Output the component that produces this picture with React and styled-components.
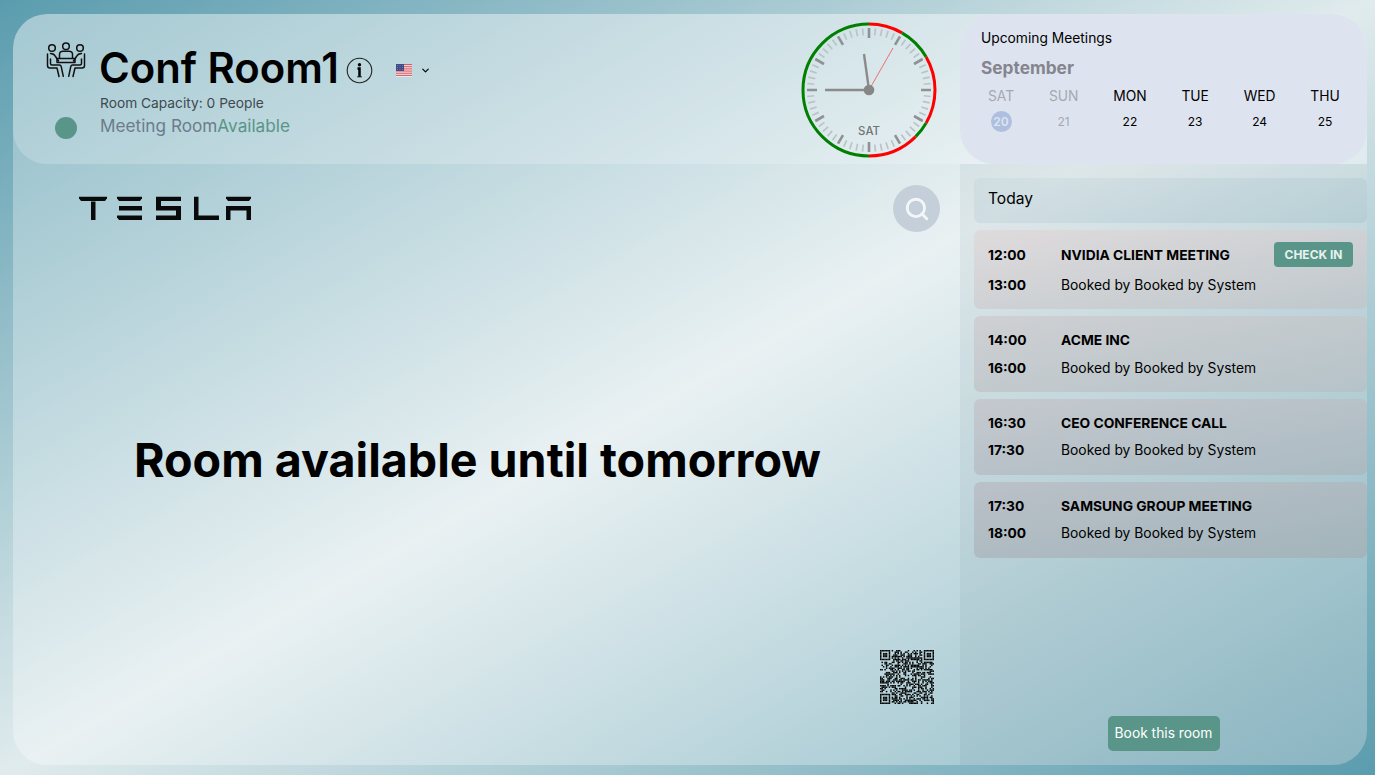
import styled, { createGlobalStyle } from "styled-components";
import { Search, ChevronDown } from "lucide-react";

const GlobalStyle = createGlobalStyle`
    html, body {
        margin: 0;
        height: 100%;
        overflow: hidden;
    }
    body {
        font-family: Inter, "Liberation Sans", sans-serif;
        color: #000;
        background: linear-gradient(to bottom right, #5a9cae 0%, #e0ebed 50%, #5a9cae 100%);
    }
`;

const Page = styled.div`
    width: 1375px;
    height: 775px;
    box-sizing: border-box;
    padding: 14px 8px 10px 13px;
`;

const Frame = styled.div`
    height: 751px;
    border-radius: 34px;
    background: rgba(255, 255, 255, 0.3);
    display: flex;
    flex-direction: column;
    overflow: hidden;
`;

const Header = styled.header`
    height: 150px;
    flex: none;
    display: flex;
    border-radius: 34px 34px 0 34px;
    background: rgba(255, 255, 255, 0.2);
`;

const RoomInfo = styled.div`
    width: 788px;
    flex: none;
    display: flex;
    box-sizing: border-box;
    padding: 28px 0 0 33px;
`;

const RoomIconColumn = styled.div`
    width: 54px;
    flex: none;
    display: flex;
    flex-direction: column;
    align-items: flex-start;
`;

const StatusDot = styled.span`
    width: 22px;
    height: 22px;
    margin: 37px 0 0 9px;
    border-radius: 50%;
    background: #5a9589;
`;

const TitleRow = styled.div`
    display: flex;
    align-items: center;
    height: 52px;
`;

const Title = styled.h1`
    margin: 0 0 0 -1px;
    font-size: 41.8px;
    line-height: 52px;
    font-weight: 600;
`;

const InfoButton = styled.span`
    display: flex;
    margin: 5px 0 0 7px;
`;

const LanguageButton = styled.span`
    display: flex;
    align-items: center;
    gap: 8px;
    margin: 5px 0 0 23px;
`;

const Capacity = styled.div`
    font-size: 13.75px;
    line-height: 18px;
    color: #3f4a50;
`;

const RoomStatus = styled.div`
    margin-top: 2px;
    font-size: 17.2px;
    line-height: 24px;
    color: #6b7c8c;
`;

const Available = styled.span`
    color: #5a9589;
`;

const ClockBox = styled.div`
    width: 159px;
    flex: none;
    box-sizing: border-box;
    padding-top: 8px;
`;

const Calendar = styled.section`
    width: 407px;
    flex: none;
    box-sizing: border-box;
    padding: 15px 21px 0;
    border-radius: 34px;
    background: #dee4ef;
`;

const CalendarTitle = styled.div`
    font-size: 13.8px;
    line-height: 18px;
`;

const Month = styled.div`
    margin-top: 9px;
    font-size: 17.3px;
    line-height: 24px;
    font-weight: 700;
    color: #85858f;
`;

const Days = styled.div`
    display: flex;
    gap: 34.8px;
    margin: 4px 0 0 7px;
`;

const Day = styled.div`
    display: flex;
    flex-direction: column;
    align-items: center;
    color: ${(p) => (p.$muted ? "#a6a9b2" : "#000")};
`;

const DayName = styled.span`
    font-size: 13.8px;
    line-height: 24px;
`;

const DayNumber = styled.span`
    width: 21px;
    height: 21px;
    margin-top: 3px;
    border-radius: 50%;
    display: flex;
    align-items: center;
    justify-content: center;
    font-size: 12px;
    font-weight: ${(p) => (p.$today ? 600 : 400)};
    color: ${(p) => (p.$today ? "#dee4ef" : "inherit")};
    background: ${(p) => (p.$today ? "#aebfdf" : "transparent")};
`;

const Body = styled.div`
    flex: 1;
    min-height: 0;
    display: flex;
`;

const MainPanel = styled.main`
    width: 947px;
    flex: none;
    box-sizing: border-box;
    display: flex;
    flex-direction: column;
    padding: 21px 20px 61px 65px;
`;

const BrandRow = styled.div`
    display: flex;
    justify-content: space-between;
    align-items: flex-start;
`;

const LogoBox = styled.div`
    display: flex;
    margin-top: 11px;
`;

const SearchButton = styled.span`
    width: 47px;
    height: 47px;
    border-radius: 50%;
    background: #c5cfd9;
    display: flex;
    align-items: center;
    justify-content: center;
    color: #f4f7f9;
`;

const Headline = styled.h2`
    margin: 200px 0 0;
    padding-left: 56px;
    font-size: 46.6px;
    line-height: 56px;
    font-weight: 700;
`;

const QrRow = styled.div`
    margin-top: auto;
    display: flex;
    justify-content: flex-end;
    padding-right: 6px;
`;

const SidePanel = styled.aside`
    flex: 1;
    box-sizing: border-box;
    display: flex;
    flex-direction: column;
    padding: 14px 0 14px 14px;
    background: rgba(90, 120, 130, 0.08);
`;

const TodayBar = styled.div`
    height: 45px;
    flex: none;
    box-sizing: border-box;
    padding: 0 0 5px 14px;
    display: flex;
    align-items: center;
    font-size: 15.6px;
    border-radius: 6px;
    background: linear-gradient(to bottom right, rgba(100, 150, 170, 0.08), rgba(100, 150, 170, 0.15));
`;

const MeetingList = styled.div`
    display: flex;
    flex-direction: column;
    gap: 7px;
    margin-top: 7px;
`;

const MeetingCard = styled.article`
    height: ${(p) => p.$height}px;
    box-sizing: border-box;
    padding: 0 14px ${(p) => (p.$shift ? 3 : 0)}px 14px;
    display: grid;
    grid-template-columns: 73px 1fr auto;
    align-content: center;
    align-items: center;
    row-gap: ${(p) => p.$rowGap}px;
    border-radius: 6px;
    background: linear-gradient(to bottom right, ${(p) => p.$from}, ${(p) => p.$to});
`;

const Time = styled.span`
    font-size: 13.8px;
    line-height: 18px;
    font-weight: 700;
`;

const MeetingTitle = styled.span`
    font-size: 13.8px;
    line-height: 18px;
    font-weight: 700;
`;

const BookedBy = styled.span`
    grid-column: 2 / 4;
    font-size: 13.85px;
    line-height: 18px;
`;

const CheckIn = styled.button`
    width: 79px;
    height: 25px;
    padding: 0;
    border: 0;
    border-radius: 4px;
    background: #5a9589;
    color: #e6f3ef;
    font-family: Inter, sans-serif;
    font-size: 12px;
    font-weight: 700;
`;

const BookRow = styled.div`
    margin-top: auto;
    padding-right: 14px;
    display: flex;
    justify-content: center;
`;

const BookButton = styled.button`
    width: 112px;
    height: 35px;
    padding: 0 0 1px;
    border: 0;
    border-radius: 5px;
    background: #5a9589;
    color: #fff;
    font-family: Inter, sans-serif;
    font-size: 13.8px;
`;

const MEETINGS = [
    { start: "12:00", end: "13:00", title: "NVIDIA CLIENT MEETING", checkIn: true, height: 79, rowGap: 8.5, from: "#dfdbdc", to: "#bfc8cd" },
    { start: "14:00", end: "16:00", title: "ACME INC", height: 76, rowGap: 10, from: "#cfd0d3", to: "#b5c3c8" },
    { start: "16:30", end: "17:30", title: "CEO CONFERENCE CALL", height: 75.5, rowGap: 9, from: "#c5c9cf", to: "#aabac1" },
    { start: "17:30", end: "18:00", title: "SAMSUNG GROUP MEETING", height: 76, rowGap: 9, from: "#bbc1c8", to: "#a2b4bb" },
];

const DAYS = [
    { name: "SAT", num: 20, muted: true, today: true },
    { name: "SUN", num: 21, muted: true },
    { name: "MON", num: 22 },
    { name: "TUE", num: 23 },
    { name: "WED", num: 24 },
    { name: "THU", num: 25 },
];

// clock arcs, degrees clockwise from 12
const ARCS = [
    { from: 0, to: 30, color: "#ff0000" },
    { from: 30, to: 60, color: "#008000" },
    { from: 60, to: 120, color: "#ff0000" },
    { from: 120, to: 135, color: "#008000" },
    { from: 135, to: 180, color: "#ff0000" },
    { from: 180, to: 360, color: "#008000" },
];

const polar = (deg, r) => {
    const a = ((deg - 90) * Math.PI) / 180;
    return [68 + r * Math.cos(a), 68 + r * Math.sin(a)];
};

const Clock = () => (
    <svg width="136" height="136" viewBox="0 0 136 136">
        {Array.from({ length: 60 }, (_, i) => {
            const major = i % 5 === 0;
            const [x1, y1] = polar(i * 6, 62);
            const [x2, y2] = polar(i * 6, major ? 52 : 55);
            return (
                <line
                    key={i}
                    x1={x1}
                    y1={y1}
                    x2={x2}
                    y2={y2}
                    stroke={major ? "#8e9294" : "#bcc3c7"}
                    strokeWidth={major ? 2.6 : 1.7}
                />
            );
        })}
        {ARCS.map((arc) => {
            const [x1, y1] = polar(arc.from, 66);
            const [x2, y2] = polar(arc.to, 66);
            const large = arc.to - arc.from > 180 ? 1 : 0;
            return (
                <path
                    key={arc.from}
                    d={`M${x1} ${y1}A66 66 0 ${large} 1 ${x2} ${y2}`}
                    fill="none"
                    stroke={arc.color}
                    strokeWidth="3"
                />
            );
        })}
        <line x1="68" y1="68" x2="63" y2="32" stroke="#8b8b8b" strokeWidth="2.4" />
        <line x1="68" y1="68" x2="24" y2="68" stroke="#8b8b8b" strokeWidth="2.4" />
        <line x1="68" y1="68" x2="92" y2="26" stroke="#f06060" strokeWidth="0.9" />
        <circle cx="68" cy="68" r="5.3" fill="#868686" />
        <text x="68" y="113" textAnchor="middle" fontFamily="Inter, sans-serif" fontSize="11.4" fontWeight="500" fill="#737373">
            SAT
        </text>
    </svg>
);

const RoomIcon = () => (
    <svg width="42" height="38" viewBox="0 0 42 38" fill="none" stroke="#111" strokeWidth="1.5" strokeLinejoin="round" strokeLinecap="round">
        <circle cx="6" cy="6" r="3.3" />
        <circle cx="20" cy="4.2" r="3.3" />
        <circle cx="34" cy="6" r="3.3" />
        <path d="M13.5 16v-3.5c0-2 1.5-3.2 3.5-3.2h6c2 0 3.500 1.200 3.500 3.200V16" />
        <path d="M11 16.500h18v4H11z" />
        <path d="M1.500 12v11.500c0 1.500 1 2.500 2.500 2.500h7l2 8.500" />
        <path d="M4.500 11.500c2.500 0 4 1 5 3l3 4.500" />
        <path d="M4.500 17v4.500c0 1 .5 1.500 1.500 1.500h7.500c1 0 1.500.8 1.800 1.800l2 9.500" />
        <path d="M38.500 12v11.500c0 1.500-1 2.500-2.500 2.500h-7l-2 8.500" />
        <path d="M35.500 11.500c-2.500 0-4 1-5 3l-3 4.500" />
        <path d="M35.500 17v4.500c0 1-.5 1.500-1.500 1.500h-7.500c-1 0-1.500.8-1.800 1.800l-2 9.500" />
    </svg>
);

const InfoIcon = () => (
    <svg width="27" height="27" viewBox="0 0 27 27" fill="none">
        <circle cx="13.5" cy="13.500" r="12.300" stroke="#222" strokeWidth="1.1" />
        <circle cx="13.500" cy="7.800" r="1.700" fill="#000" />
        <path d="M11.500 11.500h2v8" stroke="#000" strokeWidth="2.500" />
        <path d="M11.300 19.800h4.500" stroke="#000" strokeWidth="1" />
    </svg>
);

const UsFlag = () => (
    <svg width="16" height="13" viewBox="0 0 16 13">
        <rect width="16" height="13" fill="#f5efef" />
        {Array.from({ length: 7 }, (_, i) => (
            <rect key={i} y={i * 1.857} width="16" height="0.93" fill="#d4505a" />
        ))}
        <rect width="8" height="7" fill="#3f4a86" />
        {[1.5, 3.500, 5.500].map((y) =>
            [1.500, 4, 6.500].map((x) => <circle key={`${x}-${y}`} cx={x} cy={y} r="0.4" fill="#aab0d0" />)
        )}
    </svg>
);

const TeslaLogo = () => (
    <svg width="174" height="24" viewBox="0 0 174 24" fill="#0a0a0a">
        <path d="M1 .8h28v1.500l-2 2.700H3L1 2.300z" />
        <path d="M13 5.500h4.500V24H13z" />
        <path d="M39 .8h25v1.500l-2 2.700H41l-2-2.700z" />
        <path d="M41 10h23v4.500H41z" />
        <path d="M39 19.500l2 0h23V24H41l-2-2.700z" />
        <path d="M78 .8h25V5H83v5h20v14H78v-4.500h20V14.500H78z" />
        <path d="M116 .8h4.500v18.700H141V24h-25z" />
        <path d="M148 .8h25v1.500l-2 2.700h-21l-2-2.700z" />
        <path d="M148 10h25v14h-4.500v-9.500h-16V24H148z" />
    </svg>
);

// not the real code, just a stable noise with the three finder squares
const QrCode = () => {
    const size = 37;
    const cells = [];
    const inFinder = (x, y, ox, oy) => x >= ox - 1 && x <= ox + 7 && y >= oy - 1 && y <= oy + 7;
    const finderOn = (x, y, ox, oy) => {
        const dx = x - ox;
        const dy = y - oy;
        if (dx < 0 || dy < 0 || dx > 6 || dy > 6) return false;
        const ring = dx === 0 || dy === 0 || dx === 6 || dy === 6;
        const core = dx >= 2 && dx <= 4 && dy >= 2 && dy <= 4;
        return ring || core;
    };
    let seed = 7;
    for (let y = 0; y < size; y++) {
        for (let x = 0; x < size; x++) {
            seed = (seed * 1103515245 + 12345) & 0x7fffffff;
            const finders = [[0, 0], [size - 7, 0], [0, size - 7]];
            const finder = finders.find(([ox, oy]) => inFinder(x, y, ox, oy));
            const on = finder ? finderOn(x, y, finder[0], finder[1]) : (seed >> 16) % 100 < 52;
            if (on) cells.push(<rect key={`${x}-${y}`} x={x} y={y} width="1" height="1" />);
        }
    }
    return (
        <svg width="54" height="54" viewBox={`0 0 ${size} ${size}`} fill="#000">
            {cells}
        </svg>
    );
};

export default function App() {
    return (
        <>
            <GlobalStyle />
            <Page>
                <Frame>
                    <Header>
                        <RoomInfo>
                            <RoomIconColumn>
                                <RoomIcon />
                                <StatusDot />
                            </RoomIconColumn>
                            <div>
                                <TitleRow>
                                    <Title>Conf Room1</Title>
                                    <InfoButton>
                                        <InfoIcon />
                                    </InfoButton>
                                    <LanguageButton>
                                        <UsFlag />
                                        <ChevronDown size={11} strokeWidth={2.6} />
                                    </LanguageButton>
                                </TitleRow>
                                <Capacity>Room Capacity: 0 People</Capacity>
                                <RoomStatus>
                                    Meeting Room<Available>Available</Available>
                                </RoomStatus>
                            </div>
                        </RoomInfo>
                        <ClockBox>
                            <Clock />
                        </ClockBox>
                        <Calendar>
                            <CalendarTitle>Upcoming Meetings</CalendarTitle>
                            <Month>September</Month>
                            <Days>
                                {DAYS.map((d) => (
                                    <Day key={d.name} $muted={d.muted}>
                                        <DayName>{d.name}</DayName>
                                        <DayNumber $today={d.today}>{d.num}</DayNumber>
                                    </Day>
                                ))}
                            </Days>
                        </Calendar>
                    </Header>
                    <Body>
                        <MainPanel>
                            <BrandRow>
                                <LogoBox>
                                    <TeslaLogo />
                                </LogoBox>
                                <SearchButton>
                                    <Search size={26} strokeWidth={2.6} />
                                </SearchButton>
                            </BrandRow>
                            <Headline>Room available until tomorrow</Headline>
                            <QrRow>
                                <QrCode />
                            </QrRow>
                        </MainPanel>
                        <SidePanel>
                            <TodayBar>Today</TodayBar>
                            <MeetingList>
                                {MEETINGS.map((m) => (
                                    <MeetingCard
                                        key={m.start}
                                        $height={m.height}
                                        $rowGap={m.rowGap}
                                        $shift={m.checkIn}
                                        $from={m.from}
                                        $to={m.to}
                                    >
                                        <Time>{m.start}</Time>
                                        <MeetingTitle>{m.title}</MeetingTitle>
                                        {m.checkIn ? <CheckIn>CHECK IN</CheckIn> : <span />}
                                        <Time>{m.end}</Time>
                                        <BookedBy>Booked by Booked by System</BookedBy>
                                    </MeetingCard>
                                ))}
                            </MeetingList>
                            <BookRow>
                                <BookButton>Book this room</BookButton>
                            </BookRow>
                        </SidePanel>
                    </Body>
                </Frame>
            </Page>
        </>
    );
}
